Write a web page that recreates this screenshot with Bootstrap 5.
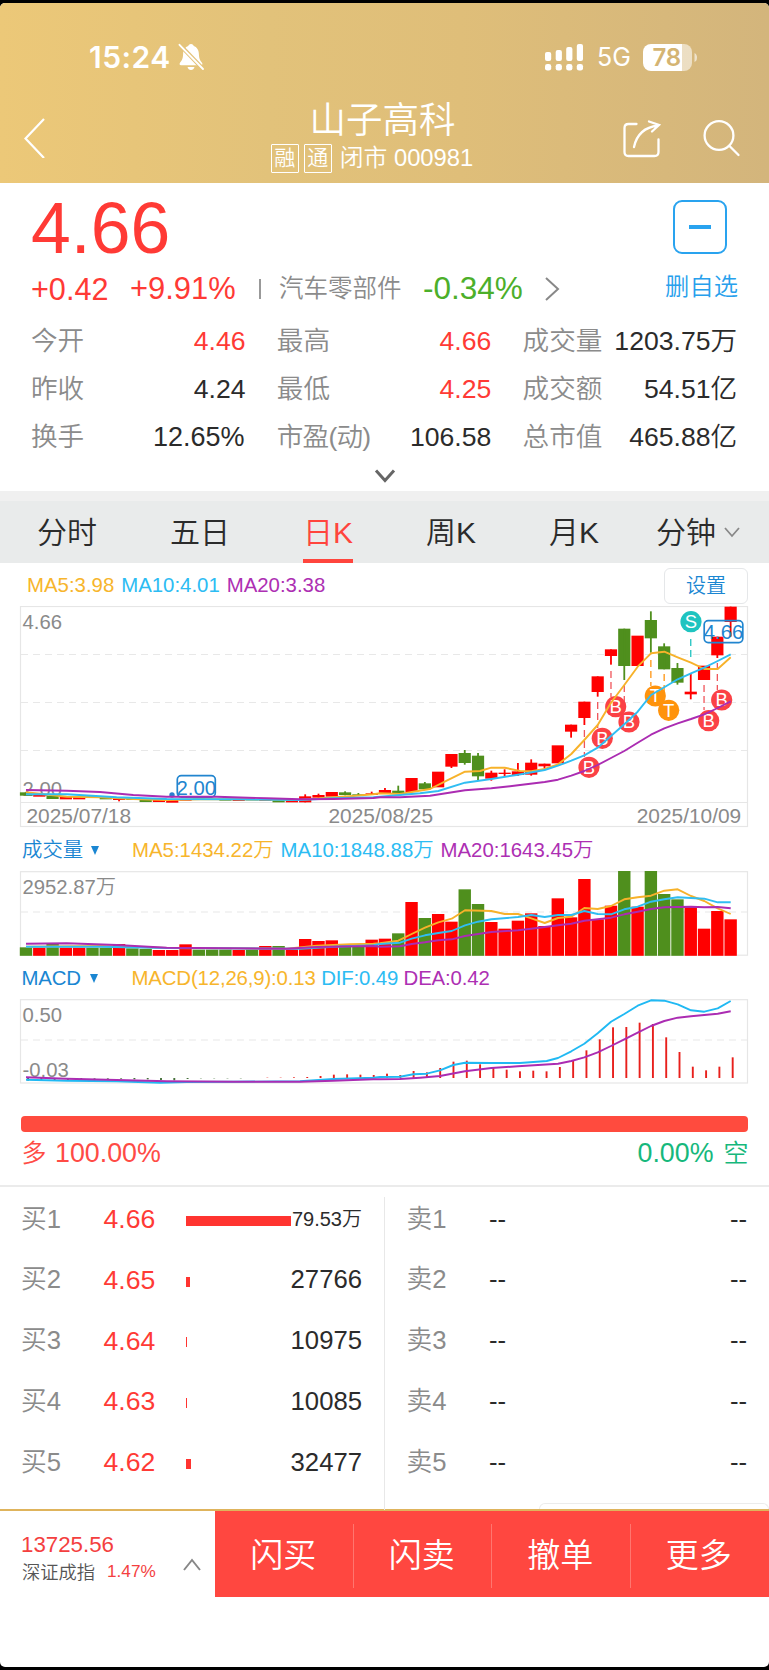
<!DOCTYPE html>
<html lang="zh-CN">
<head>
<meta charset="utf-8">
<meta name="viewport" content="width=device-width, initial-scale=1">
<title>山子高科 000981</title>
<link href="https://cdn.jsdelivr.net/npm/bootstrap@5.3.0/dist/css/bootstrap.min.css" rel="stylesheet">
<style>
  :root { --up:#ff3a35; --down:#4caf2a; --soft:#8b8b8b; --ink:#2b2b2b; --link:#1a86d2; --ma5:#f7b52c; --ma10:#2cbcf3; --ma20:#ad2fb3; }
  body { background:#000; color:var(--ink); font-family:"Liberation Sans","Noto Sans CJK SC",sans-serif; line-height:1; white-space:nowrap; }
  .screen { width:769px; height:1664px; margin-top:3px; background:#fff; border-radius:5px; overflow:hidden; }
  .up { color:var(--up); } .down { color:var(--down); } .soft { color:var(--soft); }
  .c5 { color:var(--ma5); } .c10 { color:var(--ma10); } .c20 { color:var(--ma20); } .lk { color:var(--link); }
  svg { display:block; flex:none; }

  .topbar { height:180px; background:linear-gradient(90deg,#ecc878 0%,#e2c27a 35%,#dfbe79 60%,#d3b57c 100%); color:#fff; }
  .status { height:54px; margin-top:27px; padding:0 71px 0 89px; font-family:Inter,sans-serif; }
  .clock { font-size:30px; font-weight:600; letter-spacing:.5px; width:88.500px; }
  .net { font-size:25px; line-height:32px; margin:0 7px 0 11px; padding:0 2px; width:41px; }
  .titlebar { height:99px; padding:0 28px 0 24px; }
  .tools { width:200px; }
  .name { font-size:36.5px; line-height:42px; font-weight:350; margin-top:16px; }
  .sub { font-size:23.8px; height:32px; font-weight:350; margin-right:21px; }
  .tag { width:28px; height:29px; border:1.5px solid #fff; font-size:21px; line-height:26px; text-align:center; margin-right:5px; border-radius:1px; }

  .quote { height:308px; padding:9px 31px 0 31px; }
  .price { font-size:71.5px; line-height:72px; }
  .minus { width:54px; height:54px; border:2px solid #29a3ef; border-radius:9px; margin:8px 11px 0 0; }
  .change { height:50px; font-size:30.6px; }
  .facts { display:grid; grid-template-columns:repeat(3,214.5px); column-gap:31.3px; row-gap:0; font-size:26.6px; font-weight:350; margin-top:3px; }
  .facts > div { height:48px; }
  .tabs { height:62px; background:#e9ebeb; border-top:0; font-size:30px; gap:73px; padding-left:37px; font-weight:350; }
  .strip { height:10px; background:#f0f0f0; }
  .tab { height:62px; line-height:63px; }
  .tab.on { color:#ff453d; border-bottom:4px solid #ff453d; }
  .legend { font-size:20.4px; word-spacing:1.2px; font-weight:350; }
  .legend.tight { letter-spacing:-.16px; word-spacing:0; }
  .setting { width:84px; height:36px; border:1.5px solid #e5e7e9; border-radius:6px; font-size:20px; }
  svg text { font-family:"Liberation Sans","Noto Sans CJK SC",sans-serif; font-weight:350; }
  .power { height:16px; border-radius:4px; background:#ff4b3e; margin:0 21px; }
  .balance { height:53px; padding:0 20.5px 10px 21.5px; font-size:26.8px; font-weight:350; }
  .book { height:324px; border-top:2px solid #ebebeb; padding-top:2px; }
  .side { width:384px; padding-left:21px; }
  .line { height:60.75px; font-size:25.7px; font-weight:350; }
  .line .soft { width:82.5px; }
  .line .px { width:82.5px; font-size:26.6px; }
  .depth { height:10px; background:#ff3430; margin-top:3px; }
  .asks { border-left:1.5px solid #e8e8e8; width:385px; padding:0 22px 0 21.5px; margin-top:8px; height:313px; }
  .asks .line:first-child { margin-top:-8px; }
  .peek { right:0; bottom:0; width:230px; height:6px; border:1.5px solid #ececec; border-bottom:0; border-radius:6px 6px 0 0; background:#fff; }
  .dock { height:88px; border-top:2px solid #dfb45c; }
  .index { width:215px; padding:23px 14px 0 21px; }
  .act { flex:1 1 0; background:#ff4740; color:#fff; font-size:33px; font-weight:350; position:relative; padding:2px 2px 0 0; }
  .act + .act::before { content:""; position:absolute; left:-1px; top:13px; bottom:9px; width:1px; background:#ff766f; }
</style>
</head>
<body>
<div class="screen">
  <header class="topbar d-flex flex-column">
    <div class="status d-flex align-items-center">
      <span class="clock">15:24</span>
      <svg width="27" height="28" viewBox="0 0 27 28"><path d="M13 1c-1.700 0-2.500 1-2.700 2.100C6.700 4.300 5.200 7.600 5.100 11c-.1 5-1.500 6.800-3.100 8.700-.9 1.200-.3 2.500 1 2.500h20c1.300 0 1.900-1.300 1-2.500-1.600-1.900-3-3.700-3.100-8.700-.1-3.400-1.600-6.700-5.200-7.900C15.500 2 14.700 1 13 1zM9.500 24h7c-.5 1.800-1.800 3-3.500 3s-3-1.200-3.500-3z" fill="#fff"/><path d="M1.500 1.500l24 25" stroke="#e4c37a" stroke-width="4"/><path d="M1.500 1.800l23.500 24.200" stroke="#fff" stroke-width="1.900" stroke-linecap="round"/></svg>
      <svg class="ms-auto" width="39" height="28" viewBox="0 0 39 28" fill="#fff"><rect y="9" width="6.200" height="9" rx="2"/><rect x="10.700" y="7" width="6.200" height="11" rx="2"/><rect x="21.200" y="4" width="6.200" height="14" rx="2"/><rect x="31.800" y="1" width="6.200" height="17" rx="2"/><rect y="21" width="6.200" height="6.500" rx="2.300"/><rect x="10.700" y="21" width="6.200" height="6.500" rx="2.300"/><rect x="21.200" y="21" width="6.200" height="6.500" rx="2.300"/><rect x="31.800" y="21" width="6.200" height="6.500" rx="2.300"/></svg>
      <span class="net">5G</span>
      <svg width="55" height="27" viewBox="0 0 55 27"><path d="M39 0h2a8 8 0 0 1 8 8v11a8 8 0 0 1-8 8h-2z" fill="#fff" opacity=".55"/><path d="M8 0h31v27H8a8 8 0 0 1-8-8V8a8 8 0 0 1 8-8z" fill="#fff"/><path d="M51.500 9q2.500 1 2.500 4.500t-2.500 4.500z" fill="#fff" opacity=".6"/><text x="9.500" y="22" font-size="24" textLength="28.500" style="font-family:Inter,sans-serif;font-weight:600" fill="#d4b472">78</text></svg>
    </div>
    <div class="titlebar d-flex justify-content-between">
      <div class="tools"><svg width="24" height="44" viewBox="0 -5 24 44" fill="none" stroke="#fff" stroke-width="2.200" style="margin-top:30px"><path d="M20 0L1.500 19.500 20 39"/></svg></div>
      <div class="d-flex flex-column align-items-center">
        <div class="name">山子高科</div>
        <div class="sub d-flex align-items-center"><span class="tag">融</span><span class="tag me-2">通</span><span>闭市 000981</span></div>
      </div>
      <div class="tools d-flex justify-content-end">
        <svg width="118" height="40" viewBox="623 119 118 40" fill="none" stroke="#fff" stroke-width="2.300" stroke-linecap="round" style="margin-top:35px"><path d="M636.500 124h-8q-4 0-4 4v24q0 4 4 4h26q4 0 4-4v-12.500"/><path d="M634 147q4-19 24-21.500M649 121.500l10 3.500-7 6.500"/><circle cx="719" cy="135.500" r="14.400"/><path d="M729.500 146l9 9"/></svg>
      </div>
    </div>
  </header>

  <section class="quote">
    <div class="d-flex justify-content-between" style="height:72px">
      <div class="price up">4.66</div>
      <div class="minus d-flex align-items-center justify-content-center"><svg width="22" height="4"><rect width="22" height="4" fill="#29a3ef"/></svg></div>
    </div>
    <div class="change d-flex align-items-center">
      <span class="up" style="width:99px">+0.42</span><span class="up" style="width:129px;font-size:30.900px">+9.91%</span>
      <svg width="20" height="22"><path d="M1 1v20" stroke="#777" stroke-width="1.500"/></svg>
      <span class="soft" style="font-size:24.500px;width:144px;font-weight:350">汽车零部件</span>
      <span class="down" style="width:122px;font-size:31.500px">-0.34%</span>
      <svg width="16" height="24" fill="none" stroke="#888" stroke-width="2"><path d="M1 1l12 11L1 23"/></svg>
      <span class="ms-auto" style="color:#27a0ec;font-size:24.300px;margin-top:-4px;font-weight:350">删自选</span>
    </div>
    <div class="facts">
      <div class="d-flex align-items-center justify-content-between"><span class="soft">今开</span><span class="up">4.46</span></div>
      <div class="d-flex align-items-center justify-content-between"><span class="soft">最高</span><span class="up">4.66</span></div>
      <div class="d-flex align-items-center justify-content-between"><span class="soft">成交量</span><span>1203.75万</span></div>
      <div class="d-flex align-items-center justify-content-between"><span class="soft">昨收</span><span>4.24</span></div>
      <div class="d-flex align-items-center justify-content-between"><span class="soft">最低</span><span class="up">4.25</span></div>
      <div class="d-flex align-items-center justify-content-between"><span class="soft">成交额</span><span>54.51亿</span></div>
      <div class="d-flex align-items-center justify-content-between"><span class="soft">换手</span><span style="font-size:27px;margin-right:1px">12.65%</span></div>
      <div class="d-flex align-items-center justify-content-between"><span class="soft" style="letter-spacing:-.8px">市盈(动)</span><span>106.58</span></div>
      <div class="d-flex align-items-center justify-content-between"><span class="soft">总市值</span><span>465.88亿</span></div>
    </div>
    <svg class="mx-auto" width="22" height="15" fill="none" stroke="#666" stroke-width="3" style="margin-top:8px"><path d="M2 1.500l9 10 9-10"/></svg>
  </section>

  <div class="strip"></div>
  <nav class="tabs d-flex">
    <span class="tab">分时</span><span class="tab">五日</span><span class="tab on">日K</span><span class="tab">周K</span><span class="tab">月K</span>
    <span class="tab d-flex align-items-center" style="margin-left:-16px">分钟<svg width="16" height="11" fill="none" stroke="#888" stroke-width="1.800" style="margin-left:8px"><path d="M1 1l7 8 7-8"/></svg></span>
  </nav>

  <div class="legend d-flex align-items-center justify-content-between" style="height:43px;padding:2px 21px 0 27px">
    <span><span class="c5">MA5:3.98</span> <span class="c10">MA10:4.01</span> <span class="c20">MA20:3.38</span></span>
    <span class="setting lk d-flex align-items-center justify-content-center">设置</span>
  </div>
  <svg id="kline" width="769" height="222" viewBox="0 606 769 222"></svg>
  <div class="legend d-flex align-items-center" style="height:43px;padding:2px 0 0 22px">
    <span class="lk" style="width:69px">成交量</span><svg width="8" height="9"><path d="M0 0h8L4 9z" fill="#1a86d2"/></svg>
    <span style="margin-left:33px"><span class="c5">MA5:1434.22万</span> <span class="c10">MA10:1848.88万</span> <span class="c20">MA20:1643.45万</span></span>
  </div>
  <svg id="volume" width="769" height="87" viewBox="0 871 769 87"></svg>
  <div class="legend tight d-flex align-items-center" style="height:41px;padding:0 0 0 21.500px">
    <span class="lk" style="width:68px">MACD</span><svg width="8" height="9"><path d="M0 0h8L4 9z" fill="#1a86d2"/></svg>
    <span style="margin-left:34px"><span class="c5">MACD(12,26,9):0.13</span> <span class="c10">DIF:0.49</span> <span class="c20">DEA:0.42</span></span>
  </div>
  <svg id="macd" width="769" height="86" viewBox="0 999 769 86"></svg>

  <div class="power" style="margin-top:31px"></div>
  <div class="balance d-flex align-items-center justify-content-between">
    <span class="d-flex align-items-center" style="color:#ff4b45;gap:8.500px"><span style="font-size:25px">多</span><span>100.00%</span></span>
    <span class="d-flex align-items-center" style="color:#16b87c;gap:10px"><span>0.00%</span><span style="font-size:25px">空</span></span>
  </div>

  <div class="book d-flex position-relative">
    <div class="side" id="bids"></div>
    <div class="asks" id="asks"></div>
    <div class="peek position-absolute"></div>
  </div>

  <footer class="dock d-flex">
    <div class="index d-flex justify-content-between">
      <div>
        <div style="color:#f43f3f;font-size:22.300px;height:30px">13725.56</div>
        <div class="d-flex align-items-center" style="height:19px;font-size:18.300px;font-weight:350"><span style="width:86px;padding-left:1px;color:#555">深证成指</span><span style="color:#f43f3f;font-size:17.200px;margin-top:-3px">1.47%</span></div>
      </div>
      <svg width="18" height="13" fill="none" stroke="#888" stroke-width="2" style="margin-top:24px"><path d="M1 12l8-10 8 10"/></svg>
    </div>
    <div class="act d-flex align-items-center justify-content-center">闪买</div>
    <div class="act d-flex align-items-center justify-content-center">闪卖</div>
    <div class="act d-flex align-items-center justify-content-center">撤单</div>
    <div class="act d-flex align-items-center justify-content-center">更多</div>
  </footer>
</div>

<script src="https://cdn.jsdelivr.net/npm/bootstrap@5.3.0/dist/js/bootstrap.bundle.min.js"></script>
<script>
  const R = '#ff0000', G = '#4f8f1d', STEP = 13.295;
  const cx = i => 26 + STEP * i;
  const line = (pts, color) => `<polyline points="${pts}" fill="none" stroke="${color}" stroke-width="1.900" stroke-linejoin="round"/>`;
  // left part is measured in thirds from x=0, right part in thirds from x=380
  const join = (l, r, y0) => {
    const f = (s, x0) => s.split(' ').map(p => p.split(',').map(Number)).map(([x, y]) => (x0 + x / 3).toFixed(1) + ',' + (y0 + y / 3).toFixed(1)).join(' ');
    return f(l, 0) + ' ' + f(r, 380);
  };
  const dash = y => `<path d="M21 ${y}H747" stroke="#e8e8e8" stroke-width="1.200" stroke-dasharray="7 5"/>`;
  const frame = (y, h) => `<rect x="20.500" y="${y}" width="727" height="${h}" fill="none" stroke="#e6e6e6" stroke-width="1.200"/>`;
  const label = (x, y, t, s = 20.3, c = '#8a8a8a') => `<text x="${x}" y="${y}" font-size="${s}" fill="${c}">${t}</text>`;

  // colour, body top, body bottom, wick top, wick bottom
  const candles = `g 577 587|r 583 590|g 587 597|r 589 598|r 589 598|g 588 593|g 592 598|r 594 600 594 604|g 592 600|g 597 606|r 600 606|r 600 608|r 598 602|g 596 600|g 597 600|g 598 602|r 599 603|g 598 601|r 599 603|g 600 607|r 601 607|r 589 607 583 607|r 585 593 581 593|r 576 590|g 577 585 574 586|g 583 588 579 588|r 580 585 575 585|r 570 582 564 582|g 572 580 557 580|r 534 576|g 550 568 546 570|r 515 562|r 462 500 462 504|g 459 489 450 494|g 467 529 459 540|r 518 536 512 542|r 518 522 508 528|r 514 525 489 528|r 488 524 478 527|r 491 499 491 506|r 436 490|r 374 395 374 413|r 305 354 305 375|r 229 276 229 290|r 148 168 148 194|g 86 198 86 240|r 107 198|g 60 115 34 158|g 139 208 130 208|g 204 248 189 254|r 275 283 220 298|r 197 240|r 110 166 110 174|r 20 66 20 110`.split('|');
  let k = frame(606.5, 220) + '<path d="M20 802.500H748" stroke="#e6e6e6" stroke-width="1.200"/>' + dash(654.5) + dash(702.5) + dash(750.5);
  k += label(22.5, 628.7, '4.66') + label(22.5, 795.7, '2.00');
  k += label(26.5, 822.7, '2025/07/18', 20.9) + label(328.5, 822.7, '2025/08/25', 20.9) + label(636.7, 822.7, '2025/10/09', 20.9);
  candles.forEach((c, i) => {
    const [t, a, b, w1, w2] = c.split(' '), col = t === 'r' ? R : G;
    k += `<rect x="${cx(i) - 6.1}" y="${600 + a / 3}" width="12.200" height="${(b - a) / 3}" fill="${col}"/>`;
    if (w1) k += `<rect x="${cx(i) - .9}" y="${600 + w1 / 3}" width="1.800" height="${(w2 - w1) / 3}" fill="${col}"/>`;
  });
  [[42,730,757,'#f0555a'],[43,702,728,'#f0555a'],[44,671,697,'#f0555a'],[45,685,711,'#f0555a'],[47,660,686,'#ff9410'],[48,674,700,'#ff9410'],[50,639,661,'#20c3c0'],[51,685,710,'#f0555a'],[52,663,690,'#f0555a']]
    .forEach(([i, a, b, c]) => k += `<path d="M${cx(i)} ${a}V${b}" stroke="${c}" stroke-width="1.300" stroke-dasharray="7 4"/>`);
  [['S',691,621.7],['B',589,767.3],['B',602.3,738.3],['B',615.7,706.7],['B',629,722],['T',655.3,696],['T',668.7,710.3],['B',708.7,720.7],['B',721.7,700]]
    .forEach(([t, x, y]) => k += `<circle cx="${x}" cy="${y}" r="10.600" fill="${{S:'#1fc4c0',B:'#fb4145',T:'#ff930c'}[t]}"/><text x="${x}" y="${y + 6.3}" font-size="18.500" fill="#fff" text-anchor="middle">${t}</text>`);
  k += `<circle cx="172" cy="795" r="2.700" fill="#2a7fd0"/>`;
  [[177.3,775.6,38,21.5,'2.00',795],[704.2,620.6,38.6,22,'4.66',639.3]].forEach(([x, y, w, h, t, b]) =>
    k += `<rect x="${x}" y="${y}" width="${w}" height="${h}" rx="4" fill="none" stroke="#2185cf" stroke-width="1.700"/><text x="${x + w / 2}" y="${b}" font-size="20.300" fill="#2185cf" text-anchor="middle">${t}</text>`);
  k += line(join('78,577 200,590 300,592 400,597 500,600 600,598 700,598 900,600 1000,592 1060,588 1120,583', '0,580 60,582 100,575 150,567 200,542 255,515 300,513 334,503 374,503 420,513 454,514 494,507 534,493 574,462 613,420 653,375 693,308 733,255 773,200 813,160 853,155 893,172 933,188 973,207 1013,207 1052,172', 600), '#f7b22a');
  k += line(join('78,583 200,583 350,592 500,597 700,598 900,600 1000,595 1120,592', '0,590 60,585 120,580 175,573 255,548 334,537 414,524 494,510 534,497 574,482 613,466 653,443 693,408 733,373 773,335 813,285 853,262 893,238 933,220 973,203 1013,183 1052,163', 600), '#30bdf2');
  k += line(join('78,570 200,572 300,576 400,585 500,590 650,590 800,595 900,598 1000,597 1120,594', '0,592 60,592 150,587 255,571 334,565 414,556 494,546 534,539 574,527 613,513 653,495 693,474 733,453 773,428 813,404 853,385 893,370 933,357 973,343 1013,324 1052,304', 600), '#ab2cb2');
  kline.innerHTML = k;

  const vols = '352g 353r 340g 353r 353r 353g 353g 342r 355g 357g 360r 360r 343r 359g 359g 359g 360r 359g 348r 348g 358r 327r 333r 331r 345g 345g 329r 326r 310g 216r 264g 252r 275r 178g 222g 276r 296r 272r 250r 288r 205r 262r 147r 268r 227r 122g 230r 120g 192g 208g 230r 296r 243r 268r'.split(' ');
  let v = frame(871.7, 83.5) + dash(912) + label(22.5, 893.8, '2952.87万', 20.3);
  vols.forEach((s, i) => { const y = Math.max(871, 830 + parseInt(s) / 3); v += `<rect x="${cx(i) - 6.2}" y="${y}" width="12.400" height="${955.8 - y}" fill="${s.endsWith('r') ? R : G}"/>`; });
  v += line(join('78,350 300,348 500,354 700,355 860,356 950,347 1050,343 1120,341', '0,340 55,332 95,312 135,293 175,277 215,266 255,241 334,243 374,252 414,252 454,265 494,279 534,264 574,260 613,234 653,237 693,228 733,208 773,202 813,197 853,182 893,178 933,198 973,213 1013,235 1052,252', 830), '#f7b22a');
  v += line(join('78,350 300,350 500,354 900,356 1000,350 1120,346', '0,342 60,338 95,326 135,316 175,309 215,303 255,286 294,275 334,268 414,261 454,255 494,261 534,255 574,255 613,243 653,252 693,253 733,238 773,230 813,215 853,208 893,202 933,204 973,206 1013,217 1052,217', 830), '#30bdf2');
  v += line(join('78,341 200,340 350,345 500,353 860,356 950,351 1120,348', '0,350 60,349 95,342 135,337 175,331 215,328 255,318 334,306 414,301 454,296 494,291 534,286 574,281 613,272 653,268 693,263 733,253 773,245 813,237 853,232 893,231 933,230 973,232 1013,231 1052,235', 830), '#ab2cb2');
  volume.innerHTML = v;

  // histogram ends, in thirds below y=830; the zero line is at 744
  const hist = [752,753,752,753,749,746,746,746,748,748,750,751,747,745,745,745,745,744,743,743,742,741,738,734,733,734,735,731,735,723,
    727,714,695,692,703,714,719,724,722,724,711,693,661,628,592,591,578,582,622,666,710,721,710,682];
  let m = frame(999.7, 83.3) + dash(1040) + label(22.5, 1021.8, '0.50') + label(22.5, 1077, '-0.03');
  hist.forEach((t, i) => {
    const a = Math.min(t, 744), b = Math.max(t, 744);
    m += `<rect x="${27.1 + STEP * i}" y="${830 + a / 3}" width="1.900" height="${(b - a) / 3}" fill="${i < 17 ? '#45703a' : '#e8201c'}"/>`;
  });
  m += line(join('78,749 200,752 350,754 480,758 560,756 700,755 900,754 1000,747 1120,743', '0,741 60,740 100,733 140,731 180,721 220,705 255,698 334,699 420,699 500,693 534,684 574,664 613,641 653,610 693,575 733,552 773,527 813,511 853,512 893,523 933,541 973,545 1013,535 1052,513', 830), '#20b9f3');
  m += line(join('78,742 200,746 350,750 500,754 700,755 900,755 1000,752 1120,748', '0,748 60,747 120,743 180,738 255,724 334,714 414,709 534,701 574,693 613,682 653,667 693,648 733,628 773,608 813,588 853,573 893,563 933,559 1013,551 1052,544', 830), '#ab2cb2');
  macd.innerHTML = m;

  [['4.66','79.53万',105],['4.65','27766',3.5],['4.64','10975',1.2],['4.63','10085',1.2],['4.62','32477',4.5]].forEach(([p, q, w], i) => {
    bids.innerHTML += `<div class="line d-flex align-items-center"><span class="soft">买${i + 1}</span><span class="px up">${p}</span><span class="depth" style="width:${w}px"></span><span class="ms-auto" style="margin-right:22px;font-size:${i ? 25.7 : 20}px">${q}</span></div>`;
    asks.innerHTML += `<div class="line d-flex align-items-center"><span class="soft">卖${i + 1}</span><span>--</span><span class="ms-auto">--</span></div>`;
  });
</script>
</body>
</html>
